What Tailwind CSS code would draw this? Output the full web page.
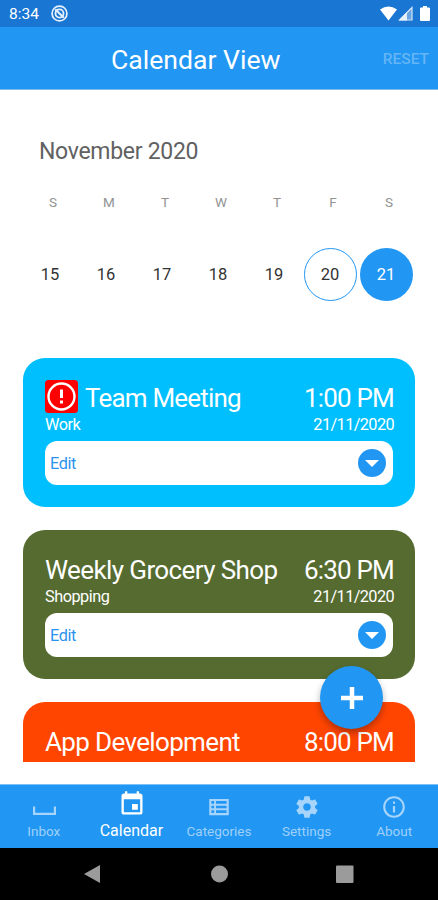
<!DOCTYPE html>
<html lang="en">
<head>
<meta charset="utf-8">
<title>Calendar View</title>
<script src="https://cdn.jsdelivr.net/npm/@tailwindcss/browser@4"></script>
</head>
<body class="w-[438px] h-[900px] overflow-hidden bg-white font-['Roboto',sans-serif] text-white">
<div class="relative flex flex-col h-[900px] w-[438px]">
  <!-- status bar -->
  <div class="h-[27px] shrink-0 bg-[#1976d2] flex items-center pl-[9px] pr-2">
    <span class="text-[15.5px] leading-none pt-[3px]">8:34</span>
    <svg class="ml-3 w-[17px] h-[17px]" viewBox="0 0 16 16" fill="none" stroke="#e6f1fc"><circle cx="8" cy="8" r="7" stroke-width="1.6"/><circle cx="8" cy="8" r="3.8" stroke-width="1.7"/><path d="M4 4l8 8" stroke-width="1.8"/></svg>
    <div class="ml-auto flex items-center">
      <svg class="w-[17px] h-[15px]" viewBox="0 0 17 15" fill="#fff"><path d="M0 3.5Q8.500-2.500 17 3.500L8.500 14.500z"/></svg>
      <svg class="ml-[1px] w-[15px] h-[15px]" viewBox="0 0 15 15"><path d="M1.500 14H14V1.500z" fill="#fff" fill-opacity=".35"/><path d="M1.500 14H14V1.500z" fill="none" stroke="#d5e6f7" stroke-width="1.200"/><path d="M1 14.500L9 6V14.500z" fill="#e6f1fc"/></svg>
      <svg class="ml-[7px] w-[10px] h-[15px]" viewBox="0 0 10 15" fill="#fff"><path d="M3 0h4v1.500h2q1 0 1 1V14q0 1-1 1H1q-1 0-1-1V2.500q0-1 1-1h2z"/></svg>
    </div>
  </div>
  <!-- app bar -->
  <header class="h-[63px] shrink-0 bg-[#2196f3] flex items-center justify-between pl-[111px] pr-[9px] border-b border-[#7db9ea]">
    <h1 class="text-[26.6px] leading-none pt-[5px] whitespace-nowrap">Calendar View</h1>
    <span class="text-[15.5px] leading-none pt-[3px] font-medium text-[#64b5f6]">RESET</span>
  </header>
  <!-- week strip -->
  <section class="h-[268px] shrink-0 pt-[48px]">
    <h2 class="pl-[39px] text-[23px] tracking-[-0.3px] leading-[28px] text-[#616161] whitespace-nowrap">November 2020</h2>
    <div class="ml-[25px] w-[392px] mt-[27px] grid grid-cols-7 text-center text-[13.5px] leading-[18px] text-[#929292]">
      <span>S</span><span>M</span><span>T</span><span>W</span><span>T</span><span>F</span><span>S</span>
    </div>
    <div class="ml-[22px] w-[392px] mt-[36px] grid grid-cols-7 text-[16.500px] text-[#333] justify-items-center items-center h-[54px] leading-none">
      <span class="pt-[3px]">15</span><span class="pt-[3px]">16</span><span class="pt-[3px]">17</span><span class="pt-[3px]">18</span><span class="pt-[3px]">19</span>
      <span class="w-[53px] h-[53px] rounded-full border border-[#2196f3] flex items-center justify-center pt-[3px]">20</span>
      <span class="w-[53px] h-[53px] rounded-full bg-[#2196f3] text-white flex items-center justify-center pt-[3px]">21</span>
    </div>
  </section>
  <!-- task list -->
  <main class="h-[404px] shrink-0 overflow-hidden px-[23px] flex flex-col gap-[23px]">
    <article class="h-[149px] shrink-0 rounded-[22px] bg-[#00bfff] px-[22px] pt-[22px]">
      <div class="flex h-[33px] items-center leading-none whitespace-nowrap text-[26px]">
        <svg class="w-[33px] h-[33px] mr-[7px]" viewBox="0 0 33 33"><rect width="33" height="33" rx="3.500" fill="#f00"/><circle cx="16.500" cy="16.500" r="13" fill="none" stroke="#fff" stroke-width="2.400"/><path d="M16.500 9.500v8.500M16.500 20.500v3" stroke="#fff" stroke-width="3"/></svg>
        <span class="pt-[3px] tracking-[-0.800px]">Team Meeting</span><span class="ml-auto pt-[3px] tracking-[-0.800px] -mr-[1px]">1:00 PM</span>
      </div>
      <div class="flex justify-between text-[16.300px] leading-[22px] pt-[1px]"><span class="tracking-[-0.500px]">Work</span><span class="tracking-[-0.600px] -mr-[1px]">21/11/2020</span></div>
      <div class="mt-[5px] h-[44px] rounded-[12px] bg-white flex items-center justify-between pl-[5px] pr-[7px]">
        <span class="text-[16.300px] tracking-[-0.400px] text-[#2b93ee] pt-[2px]">Edit</span>
        <svg class="w-7 h-7" viewBox="0 0 28 28"><circle cx="14" cy="14" r="14" fill="#2196f3"/><path d="M7 11h14l-7 7z" fill="#fff"/></svg>
      </div>
    </article>
    <article class="h-[149px] shrink-0 rounded-[22px] bg-[#556b2f] px-[22px] pt-[22px]">
      <div class="flex h-[33px] items-center leading-none whitespace-nowrap text-[26px]">
        <span class="pt-[3px] tracking-[-0.600px]">Weekly Grocery Shop</span><span class="ml-auto pt-[3px] tracking-[-0.800px] -mr-[1px]">6:30 PM</span>
      </div>
      <div class="flex justify-between text-[16.300px] leading-[22px] pt-[1px]"><span class="tracking-[-0.500px]">Shopping</span><span class="tracking-[-0.600px] -mr-[1px]">21/11/2020</span></div>
      <div class="mt-[5px] h-[44px] rounded-[12px] bg-white flex items-center justify-between pl-[5px] pr-[7px]">
        <span class="text-[16.300px] tracking-[-0.400px] text-[#2b93ee] pt-[2px]">Edit</span>
        <svg class="w-7 h-7" viewBox="0 0 28 28"><circle cx="14" cy="14" r="14" fill="#2196f3"/><path d="M7 11h14l-7 7z" fill="#fff"/></svg>
      </div>
    </article>
    <article class="h-[149px] shrink-0 rounded-[22px] bg-[#ff4500] px-[22px] pt-[22px]">
      <div class="flex h-[33px] items-center leading-none whitespace-nowrap text-[26px]">
        <span class="pt-[3px] tracking-[-0.650px]">App Development</span><span class="ml-auto pt-[3px] tracking-[-0.800px] -mr-[1px]">8:00 PM</span>
      </div>
    </article>
  </main>
  <!-- floating add button -->
  <button class="absolute left-[320px] top-[666px] w-[63px] h-[63px] rounded-full bg-[#2196f3] shadow-[0_4px_7px_rgba(0,0,0,0.3)] flex items-center justify-center" aria-label="Add">
    <svg class="w-[22px] h-[22px]" viewBox="0 0 22 22" stroke="#fff" stroke-width="4.500"><path d="M11 0v22M0 11h22"/></svg>
  </button>
  <!-- tab bar -->
  <nav class="mt-[22px] h-[64px] shrink-0 bg-[#2196f3] grid grid-cols-5 justify-items-center text-[13.500px] leading-none text-[#9fd0fa] border-t border-[#7cc0f8]">
    <div class="flex flex-col items-center"><svg class="mt-[9px] w-[26px] h-[26px]" viewBox="0 0 26 26" fill="none" stroke="#a6d4fa" stroke-width="2.200"><path d="M3.100 12.500v7.400h20.800v-7.400"/></svg><span class="mt-[5px]">Inbox</span></div>
    <div class="flex flex-col items-center text-white"><svg class="mt-[5px] ml-[1px] w-[28px] h-[28px]" viewBox="0 0 24 24" fill="#fff"><path d="M17 12h-5v5h5v-5zM16 1v2H8V1H6v2H5c-1.110 0-1.990.9-1.990 2L3 19c0 1.100.89 2 2 2h14c1.100 0 2-.9 2-2V5c0-1.100-.9-2-2-2h-1V1h-2zm3 18H5V8h14v11z"/></svg><span class="mt-[5px] text-[16px]">Calendar</span></div>
    <div class="flex flex-col items-center"><svg class="mt-[9px] w-[26px] h-[26px]" viewBox="0 0 24 24" fill="#a6d4fa"><path fill-rule="evenodd" d="M3 4.500v15h18v-15zM5 6.500h2.500v2.500H5zM5 10.750h2.500v2.500H5zM5 15h2.500v2.500H5zM9.250 6.500H19v2.500H9.250zM9.250 10.750H19v2.500H9.250zM9.250 15H19v2.500H9.250z"/></svg><span class="mt-[5px]">Categories</span></div>
    <div class="flex flex-col items-center"><svg class="mt-[9px] w-[26px] h-[26px]" viewBox="0 0 24 24" fill="#a6d4fa"><path d="M19.430 12.980c.04-.32.07-.64.07-.98s-.03-.66-.07-.98l2.110-1.650c.19-.15.24-.42.12-.64l-2-3.460c-.12-.22-.39-.3-.61-.22l-2.490 1c-.52-.4-1.080-.73-1.690-.98l-.38-2.650C14.460 2.180 14.250 2 14 2h-4c-.25 0-.46.18-.49.42l-.38 2.650c-.61.25-1.170.59-1.690.98l-2.490-1c-.23-.09-.49 0-.61.22l-2 3.460c-.13.22-.07.49.12.64l2.110 1.650c-.04.32-.07.65-.07.98s.03.66.07.98l-2.110 1.650c-.19.15-.24.42-.12.64l2 3.460c.12.22.39.3.61.22l2.490-1c.52.4 1.080.73 1.690.98l.38 2.650c.03.24.24.42.49.42h4c.25 0 .46-.18.49-.42l.38-2.650c.61-.25 1.170-.59 1.690-.98l2.490 1c.23.09.49 0 .61-.22l2-3.460c.12-.22.07-.49-.12-.64l-2.110-1.650zM12 15.500c-1.930 0-3.500-1.570-3.500-3.500s1.570-3.500 3.500-3.500 3.500 1.570 3.500 3.500-1.570 3.500-3.500 3.500z"/></svg><span class="mt-[5px]">Settings</span></div>
    <div class="flex flex-col items-center"><svg class="mt-[9px] w-[26px] h-[26px]" viewBox="0 0 24 24" fill="#a6d4fa"><path d="M11 17h2v-6h-2v6zm1-15C6.480 2 2 6.480 2 12s4.480 10 10 10 10-4.480 10-10S17.520 2 12 2zm0 18c-4.410 0-8-3.590-8-8s3.590-8 8-8 8 3.590 8 8-3.590 8-8 8zM11 9h2V7h-2v2z"/></svg><span class="mt-[5px]">About</span></div>
  </nav>
  <!-- system navigation -->
  <div class="flex-1 bg-black flex items-center justify-center">
    <svg class="w-[270px] h-[20px] mr-[1px]" viewBox="0 0 270 20" fill="#9b9b9b"><path d="M0 10L16 1v18z"/><circle cx="135.500" cy="10" r="8.500"/><rect x="252" y="1.500" width="17.500" height="17.500" rx="1"/></svg>
  </div>
</div>
</body>
</html>
